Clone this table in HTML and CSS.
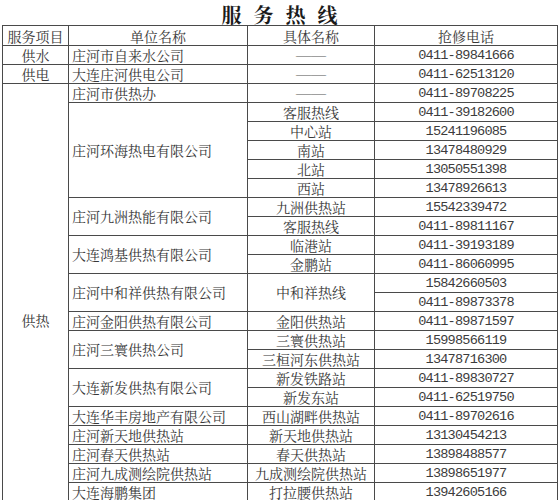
FILE: index.html
```html
<!DOCTYPE html>
<html lang="zh">
<head>
<meta charset="utf-8">
<link rel="stylesheet" href="styles.css">
</head>
<body>
<div class="page">
<h1 class="title">服务热线</h1>
<table class="hotline">
<colgroup>
<col class="c1"><col class="c2"><col class="c3"><col class="c4">
</colgroup>
<thead>
<tr><th>服务项目</th><th>单位名称</th><th>具体名称</th><th>抢修电话</th></tr>
</thead>
<tbody>
<tr><td class="cat">供水</td><td class="unit">庄河市自来水公司</td><td class="name dash">——</td><td class="tel">0411-89841666</td></tr>
<tr><td class="cat">供电</td><td class="unit">大连庄河供电公司</td><td class="name dash">——</td><td class="tel">0411-62513120</td></tr>
<tr><td class="cat heat" rowspan="22">供热</td><td class="unit">庄河市供热办</td><td class="name dash">——</td><td class="tel">0411-89708225</td></tr>
<tr><td class="unit" rowspan="5">庄河环海热电有限公司</td><td class="name">客服热线</td><td class="tel">0411-39182600</td></tr>
<tr><td class="name">中心站</td><td class="tel">15241196085</td></tr>
<tr><td class="name">南站</td><td class="tel">13478480929</td></tr>
<tr><td class="name">北站</td><td class="tel">13050551398</td></tr>
<tr><td class="name">西站</td><td class="tel">13478926613</td></tr>
<tr><td class="unit" rowspan="2">庄河九洲热能有限公司</td><td class="name">九洲供热站</td><td class="tel">15542339472</td></tr>
<tr><td class="name">客服热线</td><td class="tel">0411-89811167</td></tr>
<tr><td class="unit" rowspan="2">大连鸿基供热有限公司</td><td class="name">临港站</td><td class="tel">0411-39193189</td></tr>
<tr><td class="name">金鹏站</td><td class="tel">0411-86060995</td></tr>
<tr><td class="unit" rowspan="2">庄河中和祥供热有限公司</td><td class="name" rowspan="2">中和祥热线</td><td class="tel">15842660503</td></tr>
<tr><td class="tel">0411-89873378</td></tr>
<tr><td class="unit">庄河金阳供热有限公司</td><td class="name">金阳供热站</td><td class="tel">0411-89871597</td></tr>
<tr><td class="unit" rowspan="2">庄河三寰供热公司</td><td class="name">三寰供热站</td><td class="tel">15998566119</td></tr>
<tr><td class="name">三桓河东供热站</td><td class="tel">13478716300</td></tr>
<tr><td class="unit" rowspan="2">大连新发供热有限公司</td><td class="name">新发铁路站</td><td class="tel">0411-89830727</td></tr>
<tr><td class="name">新发东站</td><td class="tel">0411-62519750</td></tr>
<tr><td class="unit">大连华丰房地产有限公司</td><td class="name">西山湖畔供热站</td><td class="tel">0411-89702616</td></tr>
<tr><td class="unit">庄河新天地供热站</td><td class="name">新天地供热站</td><td class="tel">13130454213</td></tr>
<tr><td class="unit">庄河春天供热站</td><td class="name">春天供热站</td><td class="tel">13898488577</td></tr>
<tr><td class="unit">庄河九成测绘院供热站</td><td class="name">九成测绘院供热站</td><td class="tel">13898651977</td></tr>
<tr><td class="unit">大连海鹏集团</td><td class="name">打拉腰供热站</td><td class="tel">13942605166</td></tr>
</tbody>
</table>
</div>
</body>
</html>
```
FILE: styles.css
```css
html, body {
  margin: 0;
  padding: 0;
  background: #ffffff;
}
body {
  font-family: "Noto Serif CJK SC", "Liberation Serif", "Noto Sans CJK SC", serif;
  color: #383838;
  overflow: hidden;
}
.page {
  width: 559px;
  height: 500px;
  overflow: hidden;
}
.title {
  margin: 0;
  height: 25px;
  padding-top: 4px;
  font-size: 20px;
  line-height: 21px;
  font-weight: bold;
  color: #1a1a1a;
  text-align: center;
  letter-spacing: 12px;
  padding-left: 12px;
  box-sizing: border-box;
}
.hotline {
  margin-left: 2px;
  width: 555px;
  border-collapse: collapse;
  table-layout: fixed;
}
.c1 { width: 66px; }
.c2 { width: 179px; }
.c3 { width: 127px; }
.c4 { width: 183px; }
.hotline th,
.hotline td {
  border: 1px solid #4a4a4a;
  padding: 0;
  height: 18px;
  line-height: 17px;
  font-size: 14px;
  font-weight: normal;
  white-space: nowrap;
  overflow: hidden;
  text-align: center;
}
.hotline th {
  height: 19px;
  line-height: 18px;
}
.hotline td.unit {
  text-align: left;
  padding-left: 3px;
}
.hotline td.heat {
  vertical-align: top;
  padding-top: 228px;
}
.hotline td.dash {
  font-family: "Liberation Serif", serif;
  font-size: 15px;
  color: #555555;
}
.hotline td.tel {
  font-family: "Liberation Mono", "DejaVu Sans Mono", monospace;
  font-size: 13.6px;
  letter-spacing: -0.8px;
  color: #3c3c3c;
}
```
